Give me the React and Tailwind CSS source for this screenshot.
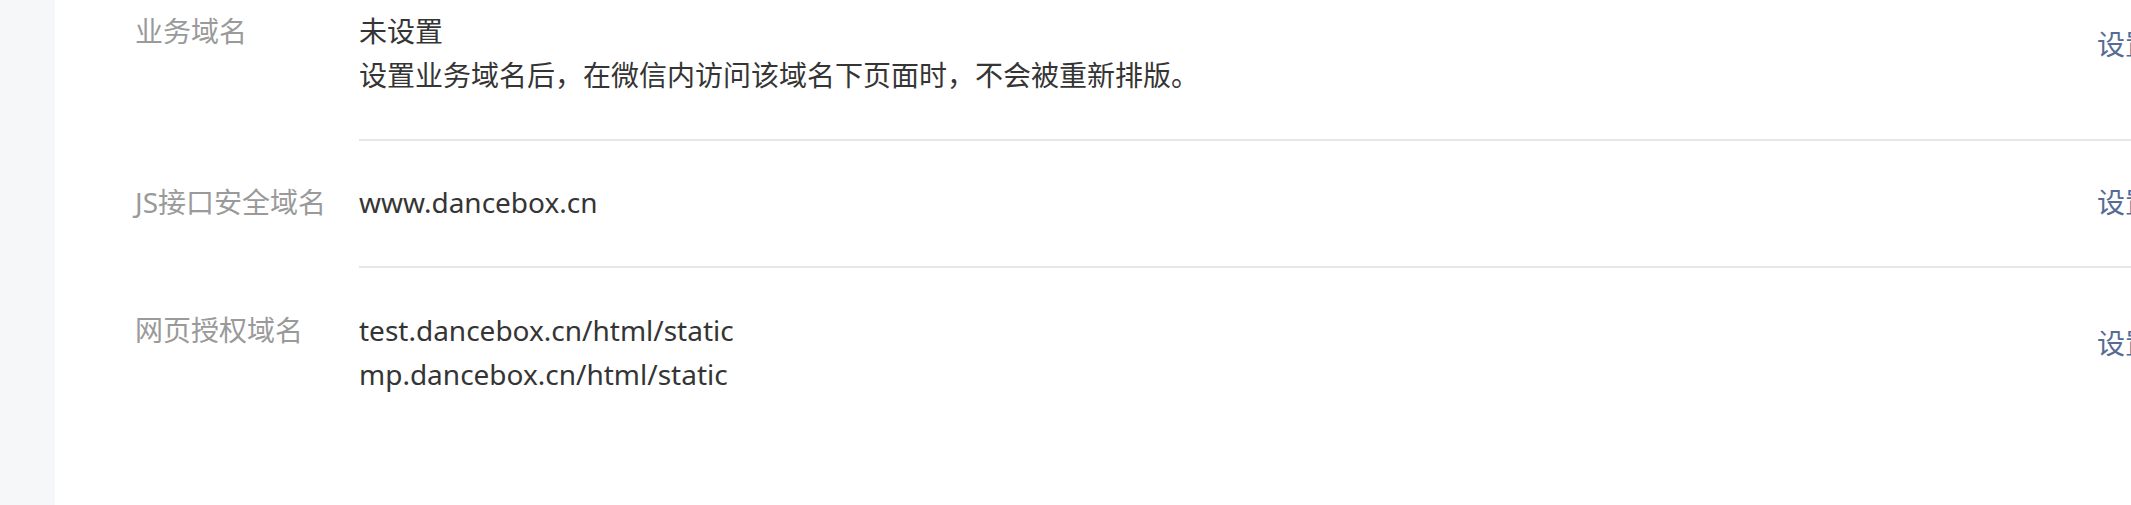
import React from 'react';

const rows = [
  {
    label: '业务域名',
    lines: ['未设置', '设置业务域名后，在微信内访问该域名下页面时，不会被重新排版。'],
    pad: 'pt-[9px] pb-[42px]',
    linkPad: 'pt-[13px]',
    divider: true,
  },
  {
    label: 'JS接口安全域名',
    lines: ['www.dancebox.cn'],
    pad: 'pt-[39px] pb-[42px]',
    linkPad: 'pt-0',
    divider: true,
  },
  {
    label: '网页授权域名',
    lines: ['test.dancebox.cn/html/static', 'mp.dancebox.cn/html/static'],
    pad: 'pt-[40px] pb-[42px]',
    linkPad: 'pt-[13px]',
    divider: false,
  },
];

function DomainRow({ row }) {
  return (
    <div className="flex">
      {/* label column */}
      <div className={`w-[224px] shrink-0 text-[#9a9a9a] ${row.pad}`}>{row.label}</div>

      {/* value + action, divider only under this part */}
      <div
        className={`flex flex-1 ${row.pad} ${row.divider ? 'border-b-2 border-[#e5e7eb]' : ''}`}
      >
        <div className="flex-1 text-[#353535]">
          {row.lines.map((line, i) => (
            <div key={i}>{line}</div>
          ))}
        </div>
        <div className={`w-[34px] shrink-0 whitespace-nowrap ${row.linkPad}`}>
          <a href="#" className="text-[#576b95]">
            设置
          </a>
        </div>
      </div>
    </div>
  );
}

export default function App() {
  return (
    <div
      className="flex min-h-[505px] w-full overflow-hidden bg-white text-[28px] leading-[44px]"
      style={{ fontFamily: '"Noto Sans", "Noto Sans CJK SC", sans-serif' }}
    >
      <div className="w-[55px] shrink-0 bg-[#f6f7f9]" />
      <div className="flex-1 pl-[80px]">
        {rows.map((row) => (
          <DomainRow key={row.label} row={row} />
        ))}
      </div>
    </div>
  );
}
